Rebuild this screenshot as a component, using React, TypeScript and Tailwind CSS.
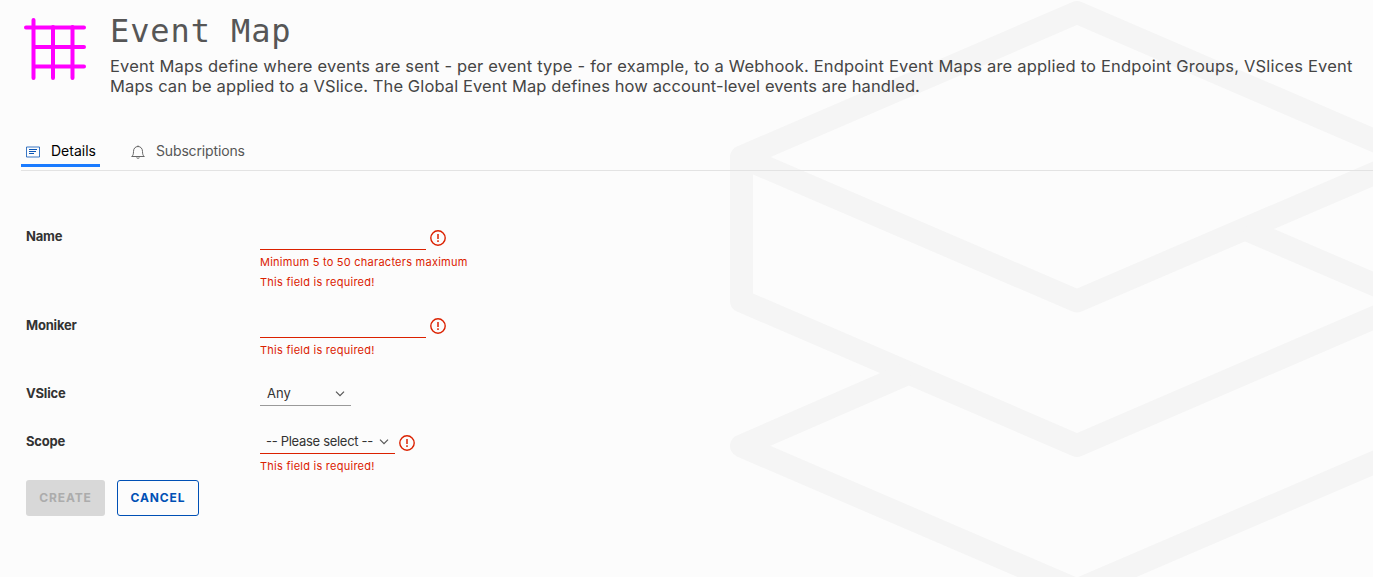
import type { ReactNode } from "react"

const ERROR = "This field is required!"

function Backdrop() {
  return (
    <svg
      className="pointer-events-none absolute top-0 left-[729px]"
      width="644"
      height="577"
      viewBox="729 0 644 577"
      fill="none"
      stroke="#f5f5f5"
      strokeWidth="23"
      strokeLinejoin="round"
    >
      <path d="M1077 12.500 741.5 157 1077 301 1412.5 157Z" />
      <path d="M741.5 157V301L1077 445.500 1412.5 301 1245 229" />
      <path d="M909 373 741.5 446 1077 590 1412.5 446" />
    </svg>
  )
}

function GridLogo() {
  return (
    <svg width="64" height="64" viewBox="0 0 64 64" stroke="#ff00ff" strokeWidth="4" strokeLinecap="round">
      <path d="M3 10.500H61M11 30H61M11 49.500H61" />
      <path d="M10.500 3V61M30 10V61M49.500 10V61" />
    </svg>
  )
}

function DetailsIcon() {
  return (
    <svg width="14" height="12" viewBox="0 0 14 12" fill="none" stroke="#0a55b5">
      <path d="M.5 1H13.500V11H.5Z" opacity=".8" />
      <path d="M3 3.500H11M3 5.500H10M3 7.500H8" />
    </svg>
  )
}

function BellIcon() {
  return (
    <svg width="14" height="14" viewBox="0 0 14 14" fill="none" stroke="#565656" strokeWidth=".9" strokeLinejoin="round">
      <path d="M7 .5V1.500M.7 11.500H13.300C12 10.500 11.500 9.200 11.500 6.500C11.500 3.500 9.700 1.500 7 1.500S2.500 3.500 2.500 6.500C2.500 9.200 2 10.500 .7 11.500ZM5.500 12.700Q7 14 8.500 12.700" />
    </svg>
  )
}

function ErrorIcon() {
  return (
    <svg width="16" height="16" viewBox="0 0 16 16" fill="none" stroke="#db2100" strokeWidth="1.4">
      <circle cx="8" cy="8" r="7.200" />
      <path d="M8 4V9M8 10.300V12" strokeWidth="1.5" />
    </svg>
  )
}

function Chevron() {
  return (
    <svg className="shrink-0" width="10" height="6" viewBox="0 0 10 6" fill="none" stroke="#565656" strokeWidth="1.200">
      <path d="M1 .7 5 4.700 9 .7" />
    </svg>
  )
}

function Field({ label, className, children }: { label: string; className: string; children: ReactNode }) {
  return (
    <div className={`flex ${className}`}>
      <div className="w-[234px] text-[13px] leading-[18px] font-bold tracking-[-0.2px] text-[#333]">{label}</div>
      <div>{children}</div>
    </div>
  )
}

function ErrorText({ children }: { children: ReactNode }) {
  return <p className="h-5 text-[11px] leading-5 tracking-[0.25px] whitespace-nowrap text-[#db2100]">{children}</p>
}

export default function App() {
  return (
    <div className="relative h-[577px] w-[1373px] overflow-hidden bg-[#fcfcfc] font-['Inter',sans-serif]">
      <Backdrop />
      <div className="relative">
        <header className="flex h-[136px] pt-[13px] pl-[23px]">
          <div className="w-[87px] pt-1">
            <GridLogo />
          </div>
          <div>
            <h1 className="h-[43px] font-['DejaVu_Sans_Mono',monospace] text-[32px] leading-9 tracking-[0.9px] text-[#565656]">
              Event Map
            </h1>
            <p className="text-[16.5px] leading-5 whitespace-nowrap text-[#454545]">
              <span className="tracking-[0.195px]">
                Event Maps define where events are sent - per event type - for example, to a Webhook. Endpoint Event Maps are applied to Endpoint Groups, VSlices Event
              </span>
              <br />
              <span className="tracking-[0.11px]">
                Maps can be applied to a VSlice. The Global Event Map defines how account-level events are handled.
              </span>
            </p>
          </div>
        </header>

        <nav className="ml-[21px] flex h-[35px] gap-[27px] border-b border-[#e3e3e3] text-[14px] leading-[26px]">
          <div className="flex h-[31px] w-[79px] items-center gap-[11px] border-b-3 border-[#1a7bff] pt-[3px] pl-[5px] text-black">
            <DetailsIcon />
            <span className="pb-0.5">Details</span>
          </div>
          <div className="flex h-[31px] items-center gap-[11px] pl-1 tracking-[-0.15px] text-[#565656]">
            <BellIcon />
            <span className="pb-0.5">Subscriptions</span>
          </div>
        </nav>

        <form className="pt-[56px] pl-[26px]">
          <Field label="Name" className="h-[89px]">
            <div className="flex h-[25px] gap-1">
              <input className="h-[23px] w-[166px] border-b border-[#db2100] outline-none" />
              <div className="pt-[3px]">
                <ErrorIcon />
              </div>
            </div>
            <ErrorText>Minimum 5 to 50 characters maximum</ErrorText>
            <ErrorText>{ERROR}</ErrorText>
          </Field>

          <Field label="Moniker" className="h-[68px]">
            <div className="flex h-6 gap-1">
              <input className="h-[22px] w-[166px] border-b border-[#db2100] outline-none" />
              <div className="pt-0.5">
                <ErrorIcon />
              </div>
            </div>
            <ErrorText>{ERROR}</ErrorText>
          </Field>

          <Field label="VSlice" className="h-12">
            <div className="flex h-[22px] w-[91px] items-center justify-between border-b border-[#9a9a9a] pr-1.5 pb-px pl-[7px] text-[13px] text-[#333]">
              <span>Any</span>
              <Chevron />
            </div>
          </Field>

          <Field label="Scope" className="h-12">
            <div className="flex h-6 gap-1">
              <div className="flex h-[22px] w-[135px] items-center justify-between border-b border-[#db2100] pr-1.5 pb-px pl-1.5 text-[13px] tracking-[-0.3px] whitespace-nowrap text-[#333]">
                <span>-- Please select --</span>
                <Chevron />
              </div>
              <div className="pt-[3px]">
                <ErrorIcon />
              </div>
            </div>
            <ErrorText>{ERROR}</ErrorText>
          </Field>

          <div className="flex gap-3 text-[12px] font-bold tracking-[0.9px]">
            <button type="button" className="h-9 w-[79px] rounded-[3px] bg-[#d8d8d8] text-[#acacac]">
              CREATE
            </button>
            <button type="button" className="h-9 w-[82px] rounded-[3px] border border-[#0050b5] text-[#0050b5]">
              CANCEL
            </button>
          </div>
        </form>
      </div>
    </div>
  )
}
